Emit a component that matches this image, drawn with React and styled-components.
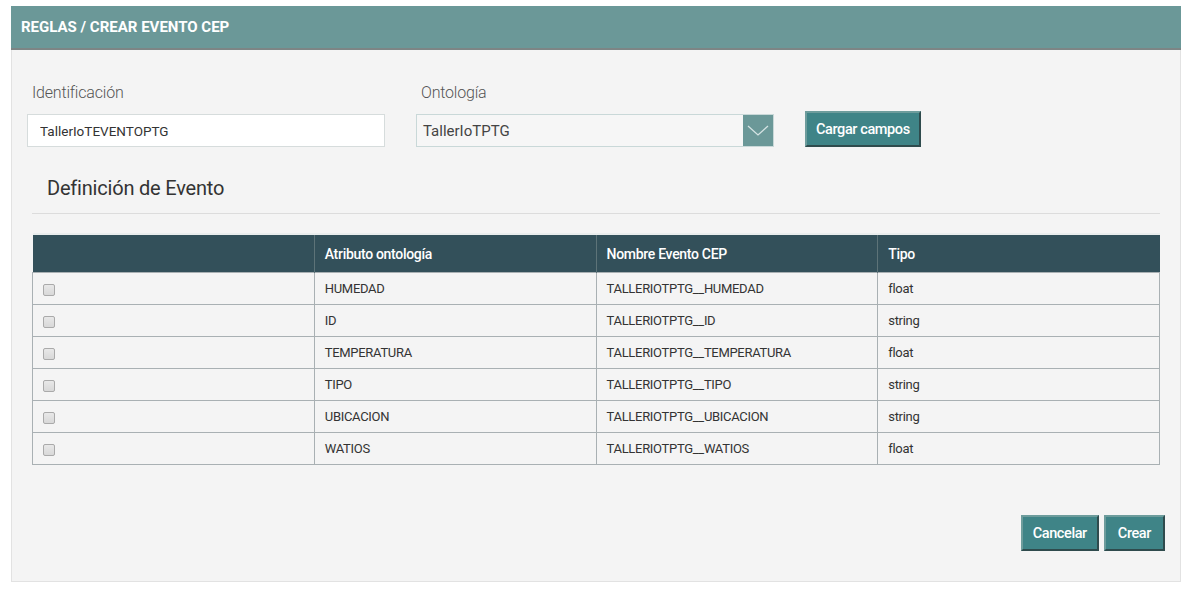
import React from 'react';
import styled, { createGlobalStyle } from 'styled-components';

const Global = createGlobalStyle`
  body {
    margin: 0;
    background: #ffffff;
    font-family: Roboto, "Open Sans", sans-serif;
    color: #333;
  }
`;

const Page = styled.div`
  padding: 6px 6px 12px 11px;
`;

const Panel = styled.div`
  width: 1170px;
  background: #f4f4f4;
  border: 1px solid #e2e2e2;
  border-top: none;
  box-sizing: border-box;
`;

const Header = styled.div`
  height: 42px;
  background: #6b9898;
  border-bottom: 2px solid #7d8585;
  margin: 0 -1px;
  display: flex;
  align-items: center;
  padding-left: 10px;
  color: #fff;
  font-size: 15px;
  font-weight: 700;
`;

const Body = styled.div`
  padding: 33px 20px 30px 20px;
`;

const FormRow = styled.div`
  display: flex;
  align-items: flex-end;
`;

const Field = styled.div`
  display: flex;
  flex-direction: column;
  margin-right: ${p => p.$gap || 0}px;
`;

const Label = styled.label`
  font-size: 16px;
  font-weight: 300;
  color: #555;
  margin-bottom: 12px;
  letter-spacing: -0.2px;
`;

const TextInput = styled.input`
  width: 358px;
  height: 33px;
  box-sizing: border-box;
  border: 1px solid #d6dcdc;
  background: #fff;
  padding: 0 12px;
  font-family: Roboto, sans-serif;
  font-size: 13.5px;
  color: #333;
  outline: none;
  margin-left: -5px;
`;

const Select = styled.div`
  width: 358px;
  height: 33px;
  box-sizing: border-box;
  border: 1px solid #c9d8d8;
  background: #f6f6f6;
  display: flex;
  align-items: center;
  font-size: 15px;
  color: #444;
  margin-left: -5px;
`;

const SelectValue = styled.span`
  flex: 1;
  padding-left: 6px;
`;

const Arrow = styled.span`
  width: 30px;
  height: 100%;
  background: #6b9898;
  display: flex;
  align-items: center;
  justify-content: center;
`;

const Button = styled.button`
  height: 36px;
  box-sizing: border-box;
  background: #3f8487;
  color: #fff;
  font-family: Roboto, sans-serif;
  font-size: 14.5px;
  font-weight: 500;
  letter-spacing: -0.4px;
  padding: 0 ${p => p.$pad || 10}px;
  border: 2px solid #2f4b4d;
  border-top-color: #6d9c9c;
  border-left-color: #6d9c9c;
  cursor: pointer;
`;

const SectionTitle = styled.h2`
  margin: 29px 0 0 0;
  padding-left: 15px;
  font-size: 20px;
  font-weight: 400;
  color: #333;
  letter-spacing: -0.2px;
  padding-bottom: 13px;
  border-bottom: 1px solid #dcdcdc;
`;

const Table = styled.table`
  width: 1128px;
  margin-top: 19px;
  border-collapse: collapse;
  table-layout: fixed;
  font-size: 13px;
  letter-spacing: -0.3px;
  border-top: 2px solid #e9eded;
`;

const Th = styled.th`
  background: #33505a;
  color: #fff;
  text-align: left;
  font-weight: 500;
  font-size: 14px;
  height: 37px;
  padding: 0 10px;
  border-left: 1px solid #5d7378;
  &:first-child { border-left: none; }
`;

const Td = styled.td`
  height: 31px;
  padding: 0 10px;
  border: 1px solid #a9b0b3;
  color: #333;
`;

const Check = styled.span`
  display: inline-block;
  width: 10px;
  height: 10px;
  border: 1px solid #aaa;
  border-radius: 2px;
  background: linear-gradient(#e8e8e8, #d8d8d8);
  vertical-align: middle;
  margin-top: 2px;
`;

const Footer = styled.div`
  display: flex;
  justify-content: flex-end;
  gap: 5px;
  margin-top: 50px;
  margin-right: -5px;
`;

const rows = [
  ['HUMEDAD', 'float'],
  ['ID', 'string'],
  ['TEMPERATURA', 'float'],
  ['TIPO', 'string'],
  ['UBICACION', 'string'],
  ['WATIOS', 'float'],
];

export default function App() {
  return (
    <Page>
      <Global />
      <Panel>
        <Header>REGLAS / CREAR EVENTO CEP</Header>
        <Body>
          <FormRow>
            <Field $gap={36}>
              <Label>Identificación</Label>
              <TextInput defaultValue="TallerIoTEVENTOPTG" />
            </Field>
            <Field $gap={31}>
              <Label>Ontología</Label>
              <Select>
                <SelectValue>TallerIoTPTG</SelectValue>
                <Arrow>
                  <svg width="22" height="12" viewBox="0 0 22 12">
                    <path d="M1 1 L11 10 L21 1" fill="none" stroke="#d5e3e3" strokeWidth="1.3" />
                  </svg>
                </Arrow>
              </Select>
            </Field>
            <Button $pad={9}>Cargar campos</Button>
          </FormRow>
          <SectionTitle>Definición de Evento</SectionTitle>
          <Table>
            <thead>
              <tr>
                <Th></Th>
                <Th>Atributo ontología</Th>
                <Th>Nombre Evento CEP</Th>
                <Th>Tipo</Th>
              </tr>
            </thead>
            <tbody>
              {rows.map(([name, type]) => (
                <tr key={name}>
                  <Td><Check /></Td>
                  <Td>{name}</Td>
                  <Td>TALLERIOTPTG__{name}</Td>
                  <Td>{type}</Td>
                </tr>
              ))}
            </tbody>
          </Table>
          <Footer>
            <Button $pad={10}>Cancelar</Button>
            <Button $pad={12}>Crear</Button>
          </Footer>
        </Body>
      </Panel>
    </Page>
  );
}
